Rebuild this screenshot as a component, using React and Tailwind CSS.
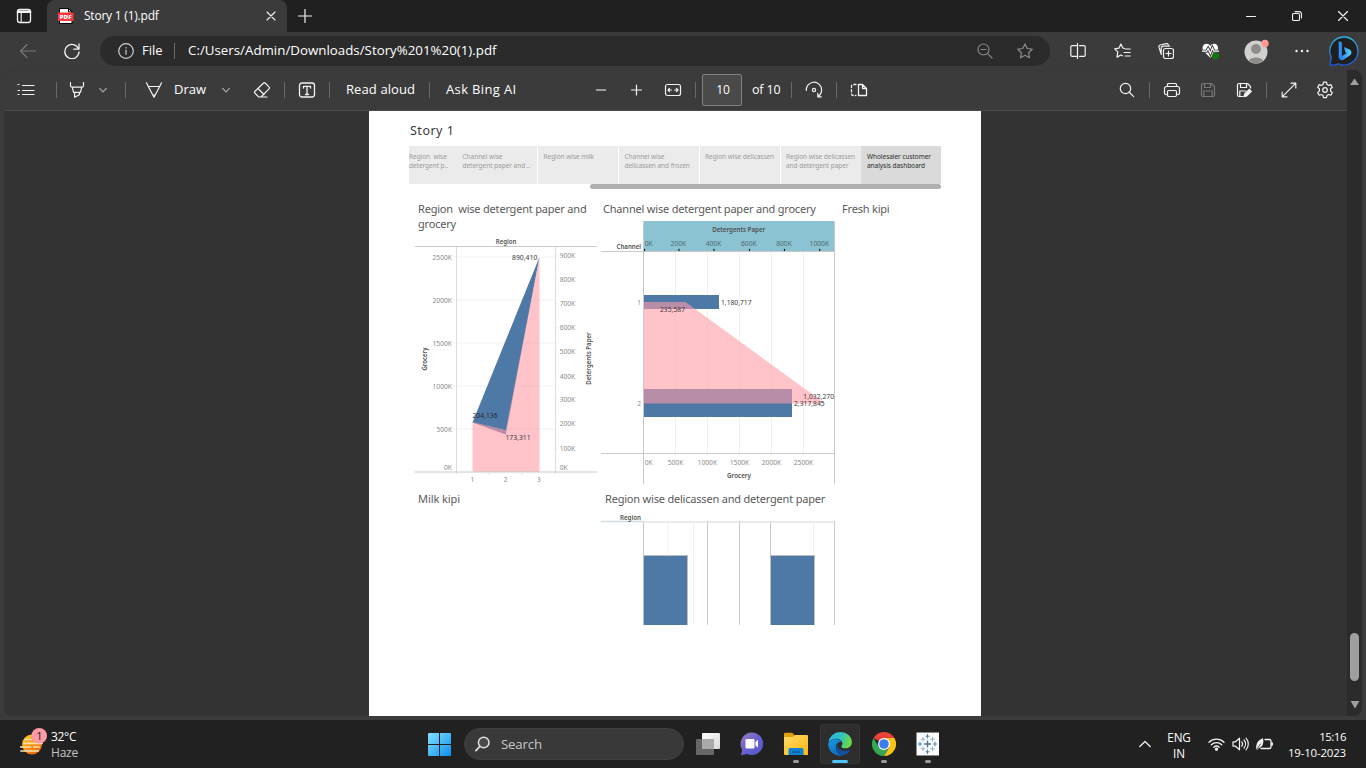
import React from "react";

function Icon({ className = "", w = 16, h = 16, color = "#f2f2f2", sw = 1.1, children }) {
  return (
    <svg
      className={"shrink-0 " + className}
      width={w}
      height={h}
      viewBox={`0 0 ${w} ${h}`}
      fill="none"
      stroke={color}
      strokeWidth={sw}
      strokeLinecap="round"
      strokeLinejoin="round"
    >
      {children}
    </svg>
  );
}

function Sep({ className = "" }) {
  return <div className={"h-4 w-px shrink-0 bg-[#6a6a6a] " + className} />;
}

function Chevron({ className = "" }) {
  return (
    <Icon w={8} h={8} color="#a8a8a8" className={className}>
      <path d="M0.7 2.5 4 5.8 7.3 2.5" />
    </Icon>
  );
}

function TitleBar() {
  return (
    <div className="flex h-8 shrink-0 items-center bg-[#202020] text-white">
      <Icon className="ml-4">
        <rect x="1.5" y="1.5" width="13" height="13" rx="2.2" strokeWidth="1.3" />
        <path d="M1.5 3.2h13M1.5 4.3h13" strokeWidth="1.6" />
        <path d="M5.2 5v9" />
      </Icon>
      <div className="ml-[15px] flex h-8 w-60 items-center rounded-t-lg bg-[#3b3b3b]">
        <svg className="ml-[11px] shrink-0" width="16" height="16" viewBox="0 0 16 16">
          <path d="M1.5 0.5h9.5l3 3v12h-12.5z" fill="#fff" stroke="#000" />
          <path d="M10.5 0.5v3.5h3.5z" fill="#ddd" stroke="#000" />
          <rect x="0" y="4.5" width="15.5" height="8.5" fill="#f9393e" />
          <text x="1.6" y="10.9" fontFamily="Open Sans, sans-serif" fontSize="5.6" fontWeight="800" fill="#fff" textLength="12" lengthAdjust="spacingAndGlyphs">PDF</text>
        </svg>
        <span className="ml-[10px] w-[150px] whitespace-nowrap font-['Open_Sans',sans-serif] text-[12px] leading-4 tracking-[-0.22px]">Story 1 (1).pdf</span>
        <Icon w={10} h={10} className="ml-[32px]">
          <path d="M1 1 9 9M9 1 1 9" />
        </Icon>
      </div>
      <Icon w={14} h={14} className="ml-[11px]" sw={1.2}>
        <path d="M7 0.5v13M0.5 7h13" />
      </Icon>
      <Icon w={10} h={10} className="ml-auto">
        <path d="M0.5 5.5h9" />
      </Icon>
      <Icon w={10} h={10} className="ml-9">
        <rect x="0.5" y="2.5" width="7" height="7" rx="1.3" />
        <path d="M3 0.6h4.2a2.3 2.3 0 0 1 2.3 2.3v4" />
      </Icon>
      <Icon w={10} h={10} className="ml-9 mr-[18px]" sw={1.2}>
        <path d="M0.5 0.5l9 9M9.5 0.5l-9 9" />
      </Icon>
    </div>
  );
}

function AddressRow() {
  return (
    <div className="flex h-[38px] shrink-0 items-center bg-[#3b3b3b] text-white">
      <Icon className="ml-5" color="#777" sw={1.2}>
        <path d="M15.5 8H0.8M7 1.5.5 8 7 14.5" />
      </Icon>
      <Icon className="ml-7" sw={1.3}>
        <path d="M14.6 6.2A7.1 7.1 0 1 0 15 9M15 1v5.2H9.8" />
      </Icon>
      <div className="ml-5 flex h-[30px] w-[950px] items-center rounded-full bg-[#2b2b2b] font-['Open_Sans',sans-serif] text-[13px]">
        <Icon className="ml-[18px]" color="#cfcfcf" sw={1.2}>
          <circle cx="8" cy="8" r="7.3" />
          <path d="M8 7.2v4M8 4.6v.3" />
        </Icon>
        <span className="ml-2 w-[22px] whitespace-nowrap">File</span>
        <Sep className="ml-[10px]" />
        <span className="ml-[13px] w-[310px] whitespace-nowrap text-[13.3px] tracking-[0.01px]">C:/Users/Admin/Downloads/Story%201%20(1).pdf</span>
        <Icon className="ml-[479px]" color="#8a8a8a">
          <circle cx="6.5" cy="6.5" r="5.5" />
          <path d="M10.6 10.6 15 15M4 6.5h5" />
        </Icon>
        <Icon className="ml-6" color="#8a8a8a" sw={1.2}>
          <path d="M8 .9l2.2 4.6 5 .7-3.6 3.5.9 5L8 12.3l-4.5 2.4.9-5L.8 6.2l5-.7z" />
        </Icon>
      </div>
      <Icon className="ml-[20px]" sw={1.2}>
        <path d="M6.5 2.6H2.2A1.4 1.4 0 0 0 .8 4v8a1.4 1.4 0 0 0 1.4 1.4h4.3M9.5 2.6h4.3A1.4 1.4 0 0 1 15.2 4v8a1.4 1.4 0 0 1-1.4 1.4H9.5M7.5 .5v15" />
      </Icon>
      <Icon w={17} className="ml-[28px]" sw={1.2}>
        <path d="M10.500 5.500 8.800 5 6.900 1 4.900 5.200.7 5.900l3.100 3-.8 5.200L6.900 12l1.500.8M11.500 6h4.700M10 9.500h6.200M11.200 13h5" />
      </Icon>
      <Icon className="ml-[27px]" sw={1.2}>
        <rect x="5.5" y="5.500" width="10" height="10" rx="2" />
        <path d="M10.500 8v5M8 10.500h5M3 10.500 1 4.400A2 2 0 0 1 2.3 2L8 .6a2 2 0 0 1 2.300 1.200M3.200 11.500V5.400a2.200 2.200 0 0 1 2.200-2.300h6.300" />
      </Icon>
      <svg className="ml-7 shrink-0" width="18" height="17" viewBox="0 0 18 17">
        <path d="M8.3 14.8 1.6 8.2C-.6 5.6.6.8 4.6.8c1.7 0 2.9.9 3.7 2.100C9.100 1.700 10.300.8 12 .8c4 0 5.200 4.800 3 7.400z" fill="#fff" />
        <path d="M0 8.200h4.500l1.600-2.700 2.300 5 2-5.500 1.500 3.200H17" fill="none" stroke="#3b3b3b" strokeWidth="3" />
        <path d="M0 8.200h4.500l1.600-2.700 2.300 5 2-5.500 1.500 3.200H17" fill="none" stroke="#fff" strokeWidth="1.200" />
        <circle cx="13.500" cy="13" r="3.600" fill="#127512" />
      </svg>
      <svg className="ml-6 shrink-0" width="26" height="26" viewBox="0 0 26 26">
        <circle cx="12" cy="14" r="11.500" fill="#d2d0ce" />
        <circle cx="12" cy="11" r="5" fill="#8e8c8a" />
        <path d="M4.500 22.600a8.300 5.600 0 0 1 15 0A11.500 11.500 0 0 1 4.500 22.600z" fill="#8e8c8a" />
        <circle cx="21" cy="5.500" r="3.700" fill="#ff9a92" />
      </svg>
      <svg className="ml-[25px] shrink-0" width="14" height="4" viewBox="0 0 14 4" fill="#f2f2f2">
        <circle cx="1.500" cy="2" r="1.200" />
        <circle cx="7" cy="2" r="1.200" />
        <circle cx="12.500" cy="2" r="1.200" />
      </svg>
      <svg className="ml-5 shrink-0" width="30" height="30" viewBox="0 0 30 30">
        <defs>
          <linearGradient id="ring" x1="0" y1="0" x2="0" y2="1">
            <stop offset="0" stopColor="#2fb4e0" />
            <stop offset="1" stopColor="#1f55d0" />
          </linearGradient>
          <linearGradient id="bee" x1="0" y1="0" x2="1" y2="0">
            <stop offset="0" stopColor="#2b6cf0" />
            <stop offset="1" stopColor="#4fd8f8" />
          </linearGradient>
        </defs>
        <path d="M15 1a14 14 0 1 1-5.500 26.900Q6 29.500 1 29.200 2 25 2.200 21A14 14 0 0 1 15 1z" fill="#1f1f1f" stroke="url(#ring)" strokeWidth="1.300" />
        <path d="M9.700 5l3.200 1.500v12l-.5 5.300-2.700-2.200z" fill="#2f8ff5" />
        <path d="M15 11l5.600 2.600c2.200 1.200 2.600 4.200.2 6l-6.400 4.200c-2 1.200-4-.3-4.500-2l5.500-3.300 2-1-1.300-2z" fill="url(#bee)" />
      </svg>
    </div>
  );
}

function PdfToolbar() {
  return (
    <div className="flex h-[41px] shrink-0 items-center rounded-tl-lg border-b border-t border-b-[#4b4b4b] border-t-[#383838] bg-[#3b3b3b] pb-px font-['Open_Sans',sans-serif] text-[13px] text-white">
      <Icon w={18} className="ml-[13px]" sw={1.2}>
        <path d="M5.500 3.500H17M5.500 8.500H17M5.500 12.500H17M1 2.500h1M1 8.500h1.500M1 12.500h1" />
      </Icon>
      <Sep className="ml-[21px]" />
      <Icon className="ml-3" sw={1.200}>
        <path d="M1.500.5v3.300a1.500 1.500 0 0 0 1.500 1.400h10a1.500 1.500 0 0 0 1.500-1.400V.5M3.400 5.400l1.100 5h7l1.100-5M5.600 10.500v4.700l4.800-2.400v-2.300" />
      </Icon>
      <Chevron className="ml-[14px]" />
      <Sep className="ml-[18px]" />
      <Icon w={18} className="ml-[19px]" sw={1.200}>
        <path d="M1.500.8l1.800 3.700h11.400L16.500.8M3.400 4.700 9 15.200l5.600-10.500M7.800 13h2.400" />
      </Icon>
      <span className="ml-[11px] w-[33px] whitespace-nowrap">Draw</span>
      <Chevron className="ml-[15px]" />
      <Icon w={18} h={18} className="ml-[23px]" sw={1.200}>
        <path d="M10.300 2.200a1.500 1.500 0 0 1 2.100 0l3.600 3.600a1.500 1.500 0 0 1 0 2.100L8.500 15.500a1.500 1.500 0 0 1-1.200.5H5.800L2 12.300a1.500 1.500 0 0 1 0-2.100zM5 7.500l6 6M7 16h7" />
      </Icon>
      <Sep className="ml-[13px]" />
      <Icon w={18} className="ml-[13px]" sw={1.300}>
        <rect x="1.500" y="1" width="15" height="14" rx="2.500" />
        <path d="M5.500 6V4.300h7V6M9 4.500v8M7.500 12.500h3" />
      </Icon>
      <Sep className="ml-[13px]" />
      <span className="ml-4 w-[70px] whitespace-nowrap tracking-[0.1px]">Read aloud</span>
      <Sep className="ml-[13px]" />
      <span className="ml-4 w-[71px] whitespace-nowrap tracking-[0.36px]">Ask Bing AI</span>
      <Icon w={12} className="ml-[78px]" color="#bdbdbd" sw={1.500}>
        <path d="M1.500 8h9" />
      </Icon>
      <Icon w={12} className="ml-[23px]" sw={1.200}>
        <path d="M6.500 3v10M1.500 8h10" />
      </Icon>
      <Icon w={18} className="ml-[22px]" sw={1.200}>
        <rect x="1.500" y="2.500" width="15" height="11" rx="2" />
        <path d="M4 8h3.500M5.500 6.500 4 8l1.500 1.500M14 8h-3.500M12.500 6.500 14 8l-1.500 1.500" />
      </Icon>
      <Sep className="ml-[13px]" />
      <div className="ml-[6px] flex h-8 w-10 items-center justify-center rounded-[2px] border border-[#808080] bg-[#4a4a4a] pl-[2px] text-[12px]">10</div>
      <span className="ml-[10px] w-[29px] whitespace-nowrap text-[12.5px] tracking-[-0.15px]">of 10</span>
      <Sep className="ml-[10px]" />
      <Icon w={18} h={18} className="ml-[13px]" sw={1.200}>
        <path d="M1.300 9.500a7.700 7.700 0 1 1 12 5.800M12.800 12.300v3.500h3.500" />
        <circle cx="9" cy="9" r="1.600" />
      </Icon>
      <Sep className="ml-[13px]" />
      <Icon w={18} className="ml-[13px]" sw={1.300}>
        <path d="M8.500 2.500h4L16.500 6.500v7h-8zM12.500 2.500v4h4" />
        <path d="M6 2.500H3A1.500 1.500 0 0 0 1.500 4v8A1.500 1.500 0 0 0 3 13.500h3" strokeDasharray="2.200 2.200" />
      </Icon>
      <Icon className="ml-[251px]" sw={1.200}>
        <circle cx="6.500" cy="6.500" r="5.200" />
        <path d="M10.500 10.500 14.700 14.700" />
      </Icon>
      <Sep className="ml-[14px]" />
      <Icon w={18} className="ml-[13px]" sw={1.200}>
        <path d="M4.500 4.500v-2A1 1 0 0 1 5.500 1.500h7a1 1 0 0 1 1 1v2M4.500 12.500H3A1.500 1.500 0 0 1 1.500 11V6.500a2 2 0 0 1 2-2h11a2 2 0 0 1 2 2V11a1.500 1.500 0 0 1-1.500 1.500h-1.500" />
        <rect x="4.500" y="8.500" width="9" height="6" rx="1.200" />
      </Icon>
      <Icon className="ml-[19px]" color="#777" sw={1.200}>
        <path d="M3 1.500h8.500l3 3V13a1.500 1.500 0 0 1-1.500 1.500H3A1.500 1.500 0 0 1 1.500 13V3A1.500 1.500 0 0 1 3 1.500zM4.500 1.500v4h6v-4M3.800 14.500V9h8.400v5.500" />
      </Icon>
      <Icon className="ml-5" sw={1.200}>
        <path d="M7 14.500H3A1.500 1.500 0 0 1 1.500 13V3A1.500 1.500 0 0 1 3 1.500h8.500l3 3v1.500M4.500 1.500v4h6v-4M3.800 14.300V9h6" />
        <path d="M8 14.700l.8-3 4.500-4.300 2 2-4.500 4.500z" fill="#f2f2f2" />
      </Icon>
      <Sep className="ml-[14px]" />
      <Icon className="ml-[14px]" sw={1.200}>
        <path d="M10 1.200h4.800V6M6 14.800H1.200V10M14.800 1.200 1.200 14.800" />
      </Icon>
      <Icon w={18} h={18} className="ml-[19px]" sw={1.200}>
        <circle cx="9" cy="9" r="2.300" />
        <path d="M7.500 1.200h3l.5 2.300 1.600.9 2.200-.8 1.500 2.600-1.700 1.600v2.200l1.700 1.600-1.500 2.600-2.200-.7-1.600.9-.5 2.300h-3L7 14.400l-1.600-.9-2.200.7-1.500-2.600L3.400 10V7.800L1.700 6.200l1.500-2.600 2.200.8L7 3.500z" />
      </Icon>
    </div>
  );
}

const GRID = "#f1f1f1";
const AXIS = "#cacaca";
const BLUE = "#4e79a7";
const PINK = "rgba(255,155,167,0.6)";

/* Chart label, vertically centred on y and fitted to the width w. */
function Label({ x, y, w, anchor = "start", bold, fill = "#8b8b8b", children }) {
  return (
    <text
      x={x}
      y={y + 2.500}
      fontFamily="Noto Sans, sans-serif"
      fontSize="6.600"
      fontWeight={bold ? 600 : 400}
      fill={bold ? "#505050" : fill}
      textAnchor={anchor}
      textLength={w}
      lengthAdjust="spacingAndGlyphs"
    >
      {children}
    </text>
  );
}

const groceryTicks = [["2500K", 257.500], ["2000K", 300.500], ["1500K", 343.500], ["1000K", 386.500], ["500K", 429.500], ["0K", 467.500]];
const paperTicks = [["900K", 255.500], ["800K", 279.500], ["700K", 303.500], ["600K", 327.500], ["500K", 351.500], ["400K", 376], ["300K", 399.500], ["200K", 423.500], ["100K", 448.500], ["0K", 467.500]];
const tickWidth = { 2: 8, 4: 15.500, 5: 19.500 };

function RegionChart() {
  return (
    <svg className="block" width="184" height="252" viewBox="415 235 184 252">
      {groceryTicks.slice(0, 5).map(([t, y]) => (
        <path key={t} d={`M453 ${y - 0.500}H555`} stroke={GRID} />
      ))}
      {paperTicks.map(([t, y]) => (
        <path key={t} d={`M555 ${y}h3`} stroke={GRID} />
      ))}
      <path d="M456.500 247V474M555.500 247V474" stroke="#dcdcdc" />
      <path d="M489 473v2M522 473v2" stroke="#e2e2e2" />
      <path d="M472.500 422.500 539.500 257 505.800 434.500z" fill={BLUE} />
      <path d="M472.500 422 505.800 430 539.500 257V472H472.500z" fill={PINK} />
      <path d="M415 246.500H597M415 472H597" stroke={AXIS} strokeWidth="1.200" />
      <Label x={506} y={241.700} w={20.500} anchor="middle" bold>Region</Label>
      {groceryTicks.map(([t, y]) => (
        <Label key={t} x={452} y={y} w={tickWidth[t.length]} anchor="end">{t}</Label>
      ))}
      {paperTicks.map(([t, y]) => (
        <Label key={t} x={559.700} y={y} w={tickWidth[t.length]}>{t}</Label>
      ))}
      <Label x={472.500} y={479.700} anchor="middle">1</Label>
      <Label x={505.700} y={479.700} anchor="middle">2</Label>
      <Label x={539} y={479.700} anchor="middle">3</Label>
      <Label x={512} y={257.500} w={25.300} fill="#3a3a3a">890,410</Label>
      <Label x={472.500} y={415.500} w={25} fill="#2a2a2a">204,136</Label>
      <Label x={505.500} y={437.500} w={25} fill="#3a3a3a">173,311</Label>
      <g transform="rotate(-90 424.700 359)">
        <Label x={424.700} y={359} w={23} anchor="middle" bold>Grocery</Label>
      </g>
      <g transform="rotate(-90 588.300 358.500)">
        <Label x={588.300} y={358.500} w={52.500} anchor="middle" bold>Detergents Paper</Label>
      </g>
    </svg>
  );
}

const topTicks = [["0K", 644.500, 648.700], ["200K", 679, 678.300], ["400K", 714, 713.500], ["600K", 749.500, 748.800], ["800K", 784.500, 784], ["1000K", 819.700, 819.300]];
const bottomTicks = [["0K", 648.700], ["500K", 675.500], ["1000K", 707.300], ["1500K", 739.500], ["2000K", 771.500], ["2500K", 803.500]];

function ChannelChart() {
  return (
    <svg className="block" width="236" height="265" viewBox="600 220 236 265">
      <rect x="643" y="221" width="191.500" height="30" fill="#8bc3d2" />
      {[675.500, 707.500, 739.500, 771.500, 803.500].map((x) => (
        <path key={x} d={`M${x} 252V456`} stroke={GRID} />
      ))}
      <rect x="644" y="295" width="75" height="14" fill={BLUE} />
      <rect x="644" y="389" width="148" height="28" fill={BLUE} />
      <path d="M644 302H685.500L825 403.500H644z" fill={PINK} />
      <path d="M643.500 221V484.500M834.500 221V484.500M601 251.500H835M601 453.500H835" stroke={AXIS} />
      {topTicks.map(([t, x, tx]) => (
        <React.Fragment key={t}>
          <path d={`M${x} 248.800V251`} stroke="#222" strokeWidth="1.200" />
          <Label x={tx} y={243.800} w={tickWidth[t.length]} anchor="middle" fill="#4f6a72">{t}</Label>
        </React.Fragment>
      ))}
      <Label x={738.700} y={229.800} w={53} anchor="middle" bold>Detergents Paper</Label>
      <Label x={641} y={246.500} w={24.500} anchor="end" bold>Channel</Label>
      <Label x={641} y={302.800} anchor="end">1</Label>
      <Label x={641} y={403.800} anchor="end">2</Label>
      <Label x={721} y={302.800} w={30.500} fill="#3a3a3a">1,180,717</Label>
      <Label x={660} y={309.800} w={25} fill="#4a3a42">235,587</Label>
      <Label x={803.300} y={396.800} w={30.700} fill="#4a3a3e">1,032,270</Label>
      <Label x={794} y={403.800} w={30.700} fill="#3a3a3a">2,317,845</Label>
      {bottomTicks.map(([t, x]) => (
        <Label key={t} x={x} y={462.800} w={tickWidth[t.length]} anchor="middle">{t}</Label>
      ))}
      <Label x={739} y={475.800} w={24} anchor="middle" bold>Grocery</Label>
    </svg>
  );
}

function DelicassenChart() {
  return (
    <svg className="block" width="236" height="114" viewBox="600 511 236 114">
      <path d="M668 522V556M693.500 522V625M813.500 522V556" stroke={GRID} />
      <path d="M643.500 521V625M707.500 521V625M739.500 521V625M770.500 521V625M834.500 521V625" stroke={AXIS} />
      <path d="M643 522H834" stroke="#d9d9d9" />
      <path d="M601 521.500H643" stroke="#cfdfe4" strokeWidth="1.300" />
      <rect x="643.500" y="555.500" width="44" height="71" fill={BLUE} stroke="#bdbdbd" />
      <rect x="770.500" y="555.500" width="44" height="71" fill={BLUE} stroke="#bdbdbd" />
      <Label x={641} y={517.800} w={21} anchor="end" bold>Region</Label>
    </svg>
  );
}

function StoryPage() {
  return (
    <div className="h-[605px] w-[612px] overflow-hidden bg-white font-['Noto_Sans',sans-serif] text-[#5a5a5a]">
      <div className="ml-[41px] pt-[11px] text-[12.5px] leading-[18px] tracking-[0.5px] text-[#3a3a3a]">Story 1</div>
      <div className="ml-10 mt-[6px] flex h-[38px] w-[532px] whitespace-pre bg-[#ebebeb] text-[6.5px] leading-[9px] tracking-[-0.04px] text-[#9c9c9c]">
        <div className="w-[47px] shrink-0 pt-[6px]">{"Region  wise\ndetergent p.."}</div>
        <div className="w-[82px] shrink-0 border-r border-white pl-[6.500px] pt-[6px]">{"Channel wise\ndetergent paper and .."}</div>
        <div className="w-[81px] shrink-0 border-r border-white pl-[5.500px] pt-[6px]">Region wise milk</div>
        <div className="w-[81px] shrink-0 border-r border-white pl-[5.500px] pt-[6px]">{"Channel wise\ndelicassen and frozen"}</div>
        <div className="w-[81px] shrink-0 border-r border-white pl-[5px] pt-[6px]">Region wise delicassen</div>
        <div className="w-[80px] shrink-0 pl-[5px] pt-[6px]">{"Region wise delicassen\nand detergent paper"}</div>
        <div className="w-[80px] shrink-0 bg-[#dadada] pl-[6px] pt-[6px] text-[#2c2c2c]">{"Wholesaler customer\nanalysis dashboard"}</div>
      </div>
      <div className="ml-[221px] h-[5px] w-[351px] rounded-full bg-[#b0b0b0]" />
      <div className="ml-[46px] mt-3 grid grid-cols-[185px_240px_140px] grid-rows-[290px_140px] text-[11px] leading-[15px] tracking-[-0.2px]">
        <div>
          <div className="h-[34px] whitespace-pre pl-[3px]">{"Region  wise detergent paper and\ngrocery"}</div>
          <div className="tracking-normal"><RegionChart /></div>
        </div>
        <div>
          <div className="h-[19px] whitespace-nowrap pl-[3px]">Channel wise detergent paper and grocery</div>
          <div className="tracking-normal"><ChannelChart /></div>
        </div>
        <div className="pl-[2px]">Fresh kipi</div>
        <div className="pl-[3px] tracking-[-0.08px]">Milk kipi</div>
        <div>
          <div className="h-5 whitespace-nowrap pl-[5px]">Region wise delicassen and detergent paper</div>
          <div className="tracking-normal"><DelicassenChart /></div>
        </div>
      </div>
    </div>
  );
}

function ScrollBar() {
  return (
    <div className="flex h-full w-[15px] shrink-0 flex-col items-center rounded-r-lg bg-[#2b2b2b]">
      <svg className="mt-2 block" width="9" height="8" viewBox="0 0 9 8"><path d="M4.500 0.500 9 7H0z" fill="#9f9f9f" /></svg>
      <div className="mt-[547px] h-12 w-[9px] rounded-full bg-[#9f9f9f]" />
      <svg className="mt-5 block" width="10" height="8" viewBox="0 0 10 8"><path d="M.5 0H9.500L5 7.500z" fill="#9f9f9f" /></svg>
    </div>
  );
}

function Weather() {
  return (
    <div className="flex items-center">
      <svg className="-mt-1 ml-5 shrink-0" width="28" height="30" viewBox="20 726 28 30">
        <defs>
          <linearGradient id="sun" x1="0" y1="0" x2="0.600" y2="1">
            <stop offset="0" stopColor="#ffd028" />
            <stop offset="1" stopColor="#ee6a10" />
          </linearGradient>
        </defs>
        <circle cx="32" cy="743.500" r="10" fill="url(#sun)" />
        <path d="M24 742.300h18M20.500 746h10M34 746h5M21 750h17M25 738.500h6" stroke="#fbe3b0" strokeWidth="1.700" strokeLinecap="round" />
        <circle cx="39.200" cy="734.800" r="7.800" fill="#ff99a4" />
        <text x="39.500" y="738.800" textAnchor="middle" fontFamily="Open Sans, sans-serif" fontSize="11" fill="#1a1a1a">1</text>
      </svg>
      <div className="ml-[3px] mt-[2px] w-20 text-[12px] leading-4 tracking-[-0.3px]">
        <div>32°C</div>
        <div className="tracking-[-0.2px] text-[#c5c5c5]">Haze</div>
      </div>
    </div>
  );
}

function Slot({ active, mark, children }) {
  return (
    <div className={"flex h-10 w-10 shrink-0 flex-col items-center rounded " + (active ? "bg-[#2d2d2d] ring-1 ring-inset ring-[#363636]" : "")}>
      <div className="flex h-10 shrink-0 items-center">{children}</div>
      {mark && <div className={"-mt-[4px] h-[3px] shrink-0 rounded-full " + (active ? "w-4 bg-[#4cc2ff]" : "w-[6px] bg-[#9a9a9a]")} />}
    </div>
  );
}

function TaskApps() {
  return (
    <div className="flex items-center gap-1">
      <Slot>
        <svg width="24" height="24" viewBox="0 0 24 24">
          <defs><linearGradient id="tv" x1="0" y1="0" x2="1" y2="1"><stop offset="0" stopColor="#fff" /><stop offset="1" stopColor="#d8d8d8" /></linearGradient></defs>
          <rect x="6" y="1" width="18" height="16" rx="1" fill="url(#tv)" />
          <rect x="0" y="7" width="18" height="16" rx="1" fill="#666" />
          <path d="M6 7h12v10H6z" fill="#aaa" />
        </svg>
      </Slot>
      <Slot>
        <svg width="24" height="24" viewBox="0 0 24 24">
          <defs><linearGradient id="chat" x1="0" y1="0" x2="1" y2="1"><stop offset="0" stopColor="#9a7bb8" /><stop offset="0.500" stopColor="#6a62d0" /><stop offset="1" stopColor="#4f55c8" /></linearGradient></defs>
          <path d="M12 .5A11.300 11.300 0 1 1 7 22L1 23.200l1.200-5.500A11.300 11.300 0 0 1 12 .5z" fill="url(#chat)" />
          <rect x="5.500" y="7" width="9" height="9.500" rx="1.200" fill="#fff" />
          <path d="M15.500 10 18 7.800v8l-2.500-2.200z" fill="#fff" />
        </svg>
      </Slot>
      <Slot mark>
        <svg width="24" height="24" viewBox="0 0 24 24">
          <defs><linearGradient id="fold" x1="0" y1="0" x2="1" y2="1"><stop offset="0" stopColor="#ffd965" /><stop offset="1" stopColor="#fdb813" /></linearGradient></defs>
          <path d="M0 2a1.200 1.200 0 0 1 1.200-1.200h7L10.500 3v3H0z" fill="#e0a010" />
          <path d="M0 5h9l2-2h12a1 1 0 0 1 1 1v18.500a.6.6 0 0 1-1 .5H1a1 1 0 0 1-1-1z" fill="url(#fold)" />
          <path d="M4.500 23V17.500a1.500 1.500 0 0 1 1.500-1.500h12a1.500 1.500 0 0 1 1.500 1.500v5.500z" fill="#1080d0" />
          <rect x="8" y="19.300" width="8" height="1.500" rx=".7" fill="#0a5c9c" />
        </svg>
      </Slot>
      <Slot active mark>
        <svg width="24" height="24" viewBox="0 0 24 24">
          <defs>
            <linearGradient id="e1" x1="0" y1="0" x2="1" y2="0.300"><stop offset="0" stopColor="#2cb8e8" /><stop offset="0.550" stopColor="#2fc0c8" /><stop offset="1" stopColor="#68d94c" /></linearGradient>
            <linearGradient id="e2" x1="0" y1="0" x2="0.600" y2="1"><stop offset="0" stopColor="#1a9ae6" /><stop offset="1" stopColor="#0f6cbd" /></linearGradient>
          </defs>
          <path d="M.3 11A12 12 0 0 1 12 0c7 0 11.900 4.800 11.900 10 0 4-3 6.300-6.300 6.300-2.800 0-4.300-1-4.300-1.900 0-.7 1.100-1.300 1.100-3 0-2.400-2.400-4.600-6-4.600-3.700 0-7.200 1.600-8.100 4.200z" fill="url(#e1)" />
          <path d="M.2 12.500C.2 9.500 4 7 8 7c2.700 0 5 1.300 5.900 3-3.300-.8-6 1.700-6 5.500 0 4.600 3.500 7.500 6.600 8.100A12 12 0 0 1 .2 12.500z" fill="url(#e2)" />
          <path d="M9.500 12.500C6.500 16 8.700 21.700 14.500 23.600c3.500-.6 6.300-2.600 7.800-5 .3-.5-.2-.8-.7-.6-5.600 2.300-12.500-.3-12.100-5.500z" fill="#124f9c" />
        </svg>
      </Slot>
      <Slot mark>
        <svg width="24" height="24" viewBox="0 0 24 24">
          <path d="M12 12 1.600 6A12 12 0 0 1 22.400 6z" fill="#ea4335" />
          <path d="M22.400 6A12 12 0 0 1 12 24l5.200-9L12 6.600 13 6z" fill="#fbc116" />
          <path d="M1.600 6 6.800 15 12 17.500h4L12 24A12 12 0 0 1 1.600 6z" fill="#34a853" />
          <circle cx="12" cy="12" r="6" fill="#fff" />
          <circle cx="12" cy="12" r="4.800" fill="#3b7ded" />
        </svg>
      </Slot>
      <Slot mark>
        <svg width="24" height="24" viewBox="0 0 24 24" fill="none">
          <rect x=".5" y=".5" width="22.500" height="23" fill="#fafafa" />
          <path d="M11.500 8.500v7M8 12h7" stroke="#48708f" strokeWidth="1.300" />
          <path d="M11.500 2v4.500M9.500 4.200h4M11.500 17.500V22M9.500 19.800h4M4 9.800v4.400M2 12h4M19 9.800v4.400M17 12H21" stroke="#4f84ad" strokeWidth="1" />
          <path d="M7 5v4.500M4.800 7.200h4.400M16.500 5v4.500M14.300 7.200h4.400M7 14.500V19M4.800 16.800h4.400M16.500 14.500V19M14.300 16.800h4.400" stroke="#8fb6d0" strokeWidth="1" />
        </svg>
      </Slot>
    </div>
  );
}

function Taskbar() {
  return (
    <div className="flex h-12 shrink-0 items-center bg-[#212121] font-['Open_Sans',sans-serif] text-white">
      <Weather />
      <svg className="ml-[297px] shrink-0" width="23" height="23" viewBox="0 0 23 23">
        <defs><linearGradient id="win" gradientUnits="userSpaceOnUse" x1="0" y1="0" x2="23" y2="23"><stop offset="0" stopColor="#86e0fc" /><stop offset="1" stopColor="#0a90f0" /></linearGradient></defs>
        <path d="M0 1a1 1 0 0 1 1-1h10v11H0zM12 0h10a1 1 0 0 1 1 1v10H12zM0 12h11v11H1a1 1 0 0 1-1-1zM12 12h11v10a1 1 0 0 1-1 1H12z" fill="url(#win)" />
      </svg>
      <div className="ml-[13px] flex h-8 w-[220px] shrink-0 items-center rounded-full border border-[#404040] bg-[#393939]">
        <Icon className="ml-[10px]" color="#e0e0e0" sw={1.500}>
          <circle cx="8.700" cy="6.500" r="5.300" fill="#4a4a4a" />
          <path d="M4.800 10.500.9 14.600" strokeWidth="1.800" />
        </Icon>
        <span className="ml-[10px] mt-px text-[13.3px] tracking-[-0.2px] text-[#c8c8c8]">Search</span>
      </div>
      <div className="ml-1"><TaskApps /></div>
      <Icon w={12} className="ml-auto" sw={1.300}>
        <path d="M.8 10.500 6 5.500l5.200 5" />
      </Icon>
      <div className="ml-[6px] mt-[2px] w-11 text-center text-[11.700px] leading-4 tracking-[-0.15px]">
        <div>ENG</div>
        <div>IN</div>
      </div>
      <Icon w={17} className="ml-[7px]" sw={1.300}>
        <path d="M1 6.200a10.800 10.800 0 0 1 15 0M3.300 8.800a7.400 7.400 0 0 1 10.400 0M5.800 11.200a4 4 0 0 1 5.400 0" />
        <circle cx="8.500" cy="13.200" r="1" fill="#f2f2f2" />
      </Icon>
      <Icon w={17} className="ml-[7px]" sw={1.200}>
        <path d="M1 5.800h2.500L7.500 2.200v11.600L3.500 10.200H1zM9.800 5.800a3.500 3.500 0 0 1 0 4.400M12 4a6 6 0 0 1 0 8M14 2.200a8.500 8.500 0 0 1 0 11.600" />
      </Icon>
      <Icon w={17} className="ml-[7px]" sw={1.300}>
        <path d="M9 3.500h4.500A1.500 1.500 0 0 1 15 5v6a1.500 1.500 0 0 1-1.500 1.500H5M16.300 6.800v2.400" />
        <path d="M1 13c-.8-4.500 1.200-8 5.500-10 .8 4.500-.8 8-4 8.500z" fill="#f2f2f2" />
        <path d="M1 13 4.500 8" stroke="#212121" strokeWidth=".8" />
      </Icon>
      <div className="ml-2 mr-5 mt-[2px] w-[65px] whitespace-nowrap text-right text-[11.500px] leading-4 tracking-[-0.200px]">
        <div className="tracking-[-0.5px]">15:16</div>
        <div>19-10-2023</div>
      </div>
    </div>
  );
}

export default function App() {
  return (
    <div className="flex h-[768px] w-[1366px] flex-col overflow-hidden bg-[#3b3b3b]">
      <TitleBar />
      <AddressRow />
      <div className="mx-1 flex h-[646px] shrink-0">
        <div className="flex w-[1343px] shrink-0 flex-col">
          <PdfToolbar />
          <div className="flex h-[605px] rounded-bl-lg bg-[#333333] pl-[365px]">
            <StoryPage />
          </div>
        </div>
        <ScrollBar />
      </div>
      <div className="h-1 shrink-0" />
      <Taskbar />
    </div>
  );
}
